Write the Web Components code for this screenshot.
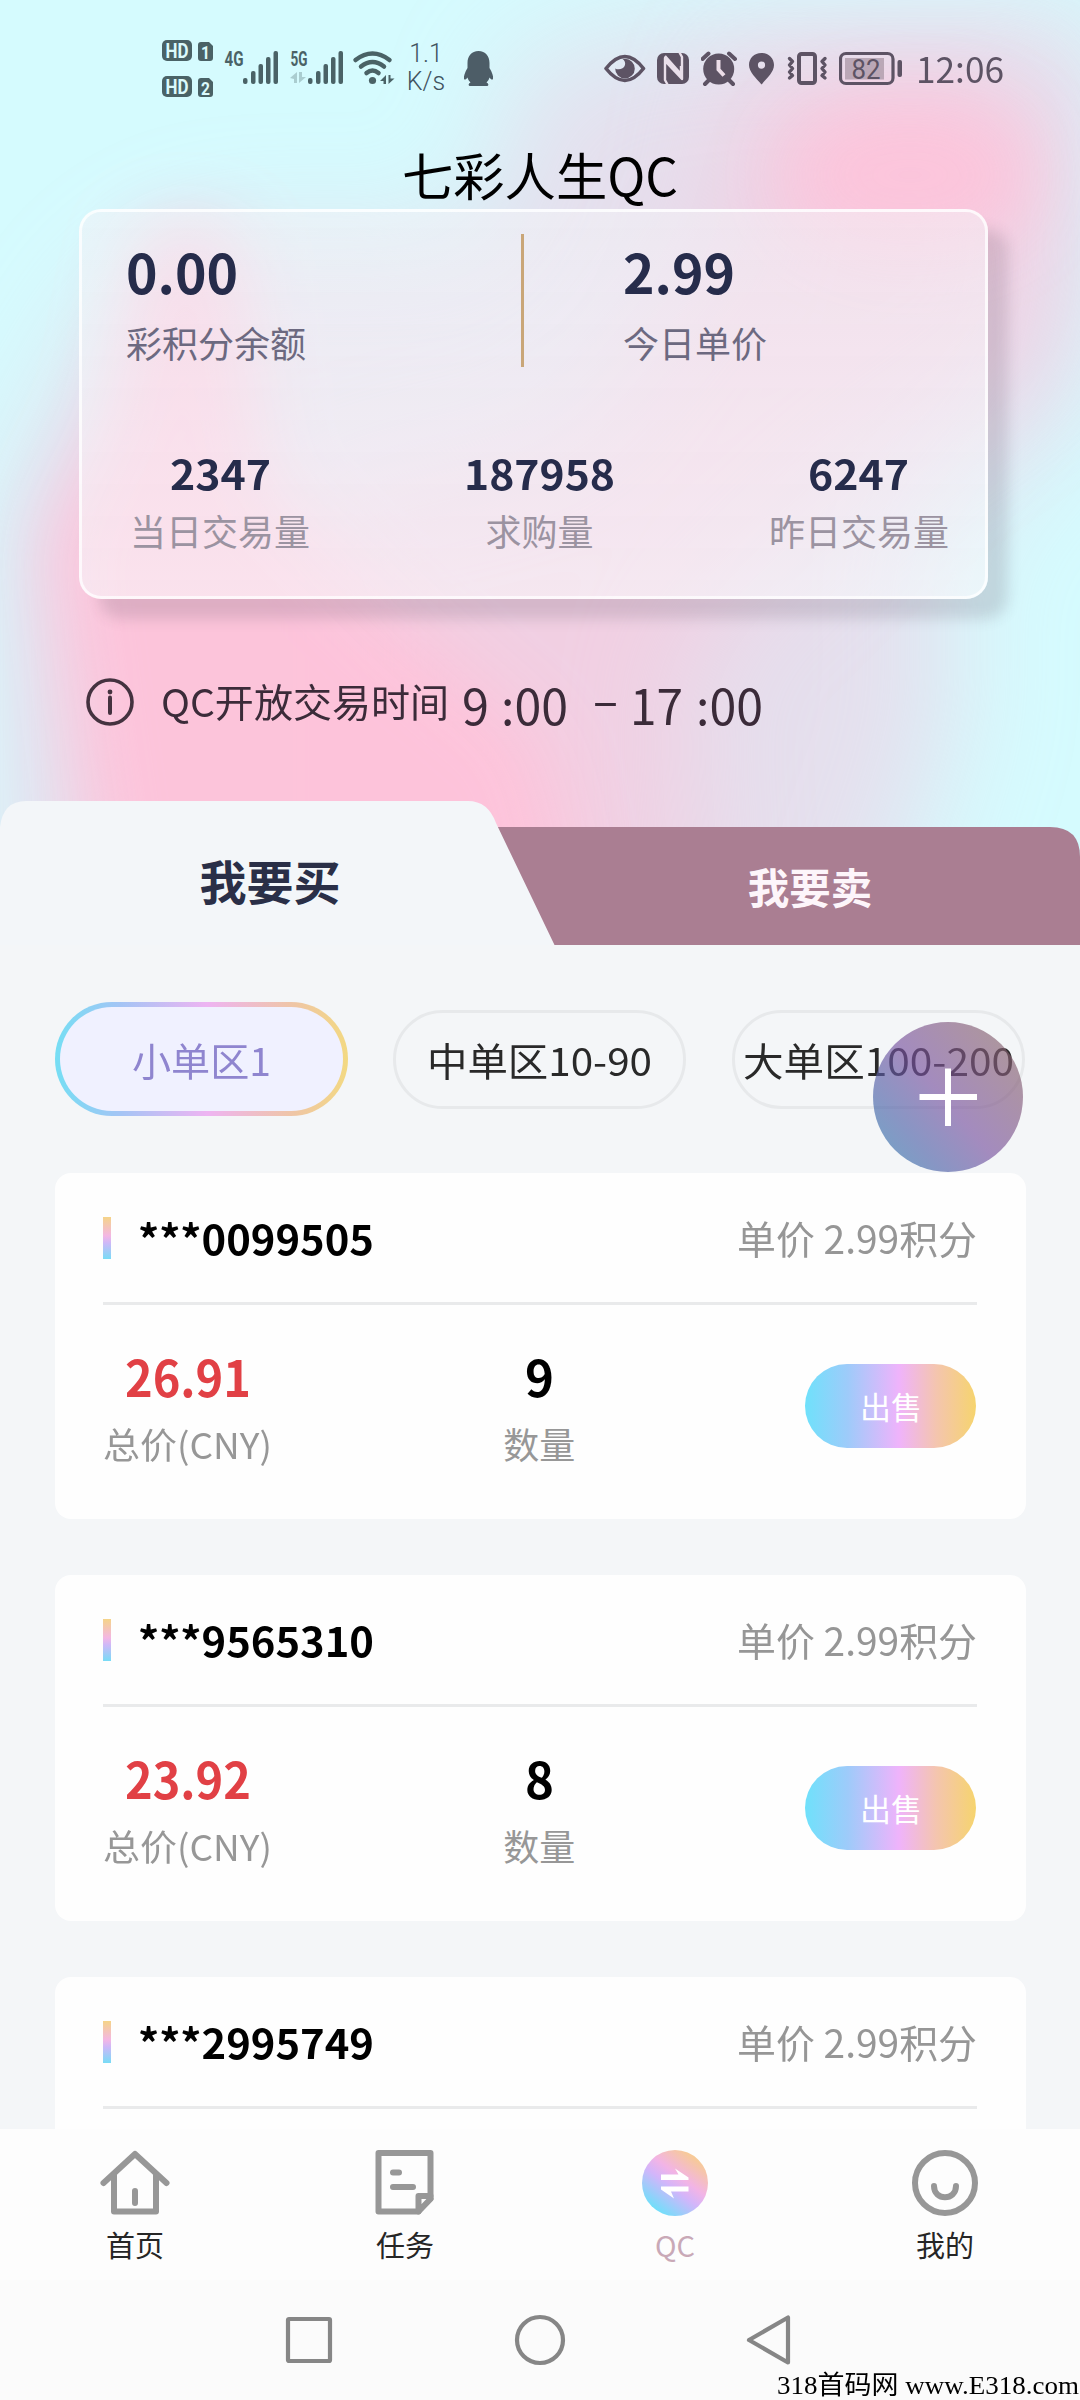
<!DOCTYPE html>
<html lang="zh-CN">
<head>
<meta charset="utf-8">
<title>七彩人生QC</title>
<style>
html,body{margin:0;padding:0}
body{width:1080px;height:2400px;overflow:hidden;background:#f4f5f7;font-family:"Noto Sans CJK SC","Noto Sans",sans-serif;color:#222}
</style>
</head>
<body>
<qc-app></qc-app>
<script>
const define = (name, html, setup) => {
  const t = document.createElement('template');
  t.innerHTML = html;
  customElements.define(name, class extends HTMLElement {
    connectedCallback() {
      if (this.shadowRoot) return;
      this.attachShadow({mode: 'open'}).appendChild(t.content.cloneNode(true));
      if (setup) setup(this, this.shadowRoot);
    }
  });
};

/* Single line of text, optionally condensed or widened to the width in "w". */
define('fit-text', `<style>
:host{display:inline-block;line-height:1;white-space:nowrap;flex:none}
span{display:inline-block;transform-origin:0 50%;white-space:pre}
</style><span><slot></slot></span>`, (el, root) => {
  const w = parseFloat(el.getAttribute('w'));
  if (!w) return;
  const s = root.querySelector('span');
  const n = s.getBoundingClientRect().width;
  el.style.width = w + 'px';
  if (n) s.style.transform = 'scaleX(' + (w / n) + ')';
});

define('status-bar', `<style>
:host{display:flex;height:120px;box-sizing:border-box;padding:38px 76px 0 162px;color:#4a6266;justify-content:space-between;align-items:flex-start}
div{display:flex;align-items:flex-start}
.r{color:#5d5364}
svg{display:block;flex:none}
text{font-family:Roboto,sans-serif}
.net{display:flex;flex-direction:column;gap:4px;align-items:center;font:300 25px/24px Roboto,sans-serif;width:40px;margin:4px 0 0 10px;color:#41535f}
.clock{font-size:36px;margin:11px 0 0 13px}
</style>
<div>
<svg width="52" height="62" viewBox="162 38 52 62"><g fill="currentColor"><rect x="162" y="40" width="30" height="21" rx="5"/><rect x="162" y="76" width="30" height="21" rx="5"/><path d="M201 42h8l4 4v12q0 3-3 3h-9q-3 0-3-3V45q0-3 3-3zM201 78h8l4 4v12q0 3-3 3h-9q-3 0-3-3V81q0-3 3-3z"/></g>
<g fill="#dcfafc" font-weight="700" font-size="20"><text x="165.500" y="57.800" textLength="23" lengthAdjust="spacingAndGlyphs">HD</text><text x="165.500" y="93.800" textLength="23" lengthAdjust="spacingAndGlyphs">HD</text><text x="201" y="58.500" font-size="18" textLength="9" lengthAdjust="spacingAndGlyphs">1</text><text x="201" y="94.500" font-size="18" textLength="9" lengthAdjust="spacingAndGlyphs">2</text></g></svg>
<svg width="56" height="62" viewBox="224 38 56 62" style="margin-left:10px" fill="currentColor"><text x="224.500" y="66" font-size="20" font-weight="700" textLength="19" lengthAdjust="spacingAndGlyphs">4G</text><g><rect x="243" y="78" width="4.500" height="6" rx="2"/><rect x="251" y="71" width="4.500" height="13" rx="2"/><rect x="258.500" y="64" width="4.500" height="20" rx="2"/><rect x="266" y="57" width="4.500" height="27" rx="2"/><rect x="273.500" y="51" width="4.500" height="33" rx="2"/></g></svg>
<svg width="56" height="62" viewBox="289 38 56 62" style="margin-left:9px" fill="currentColor"><text x="290.500" y="66" font-size="20" font-weight="700" textLength="17" lengthAdjust="spacingAndGlyphs">5G</text><path opacity=".3" d="M290 78l7-6v11h-3v-4zM299 72h3v5h4l-7 6z"/><g><rect x="308" y="78" width="4.500" height="6" rx="2"/><rect x="316" y="71" width="4.500" height="13" rx="2"/><rect x="323.500" y="64" width="4.500" height="20" rx="2"/><rect x="331" y="57" width="4.500" height="27" rx="2"/><rect x="338.500" y="51" width="4.500" height="33" rx="2"/></g></svg>
<svg width="44" height="62" viewBox="352 38 44 62" style="margin-left:7px"><g fill="none" stroke="currentColor" stroke-width="4.500" stroke-linecap="round"><path d="M355.500 60q17-13 34 0M361 66.500q11.500-9 23 0M366.500 73q6-5 12 0"/></g><circle cx="372.500" cy="80.500" r="3.600" fill="currentColor"/><path fill="currentColor" d="M380 81l6-6v9h-2.500v-3zM388.500 75h2v3.500h4l-6 5.500z"/></svg>
<div class="net"><span>1.1</span><span>K/s</span></div>
<svg width="32" height="62" viewBox="463 38 32 62" style="margin-left:17px"><path fill="#4d5d67" d="M478.500 51c7 0 11 5 11 12v5c2.500 4 4 8 3.500 11-.7 1.500-2.500 0-3.500-1.500-.6 2-1.500 3.500-3 5 2 .8 2.500 3 1 3.500h-18c-1.500-.5-1-2.700 1-3.500-1.500-1.500-2.400-3-3-5-1 1.500-2.800 3-3.500 1.500-.5-3 1-7 3.500-11v-5c0-7 4-12 11-12z"/></svg>
</div>
<div class="r">
<svg width="42" height="62" viewBox="604 38 42 62"><path d="M606 68.500Q625 44.500 643.500 68.500Q625 92.500 606 68.500z" fill="none" stroke="currentColor" stroke-width="3.600" stroke-linejoin="round"/><path fill="currentColor" d="M625 58.800a9.800 9.800 0 1 1-9.800 9.600c2.600 1.600 8.600 1.200 9.800-3.400.7-2.600-.6-4.800-2.500-6z"/></svg>
<svg width="32" height="62" viewBox="657 38 32 62" style="margin-left:11px"><rect x="657" y="53" width="32" height="31" rx="7" fill="currentColor"/><g fill="none" stroke="#e9dfea" stroke-width="2.400" stroke-linejoin="round"><path d="M667.500 84.500L665 80V58L681 75.500V66M679.500 52.500L682 57V79L665 61M665 56L681 74"/></g></svg>
<svg width="36" height="62" viewBox="701 38 36 62" style="margin-left:12px"><circle cx="718.700" cy="69" r="15.500" fill="currentColor"/><path d="M702.500 59l6-5.500M729 53.500l6 5.500M709 80l-4 4M729 80l4 4" stroke="currentColor" stroke-width="4" stroke-linecap="round"/><path d="M718.500 60v9.500l5.500 6" fill="none" stroke="#ecdde8" stroke-width="4"/></svg>
<svg width="26" height="62" viewBox="749 38 26 62" style="margin-left:12px"><path fill="currentColor" fill-rule="evenodd" d="M761.500 53c7.500 0 12.500 5.500 12.500 12 0 7-7 13-12.500 19.500C756 78 749 72 749 65c0-6.500 5-12 12.500-12zm0 8.500a3.600 3.600 0 1 0 0 7.200 3.600 3.600 0 0 0 0-7.200z"/></svg>
<svg width="41" height="62" viewBox="787 38 41 62" style="margin-left:12px"><g fill="none" stroke="currentColor" stroke-width="4"><rect x="799" y="54" width="16" height="29" rx="2.500"/><path stroke-width="3.400" stroke-linejoin="round" stroke-linecap="round" d="M789.500 58.500l3 3-3 3.500 3 3.500-3 3.500 3 3.500-3 2.500M825 58.500l-3 3 3 3.500-3 3.500 3 3.500-3 3.500 3 2.500"/></g></svg>
<svg width="64" height="62" viewBox="839 38 64 62" style="margin-left:11px"><rect x="840.500" y="53.500" width="52.500" height="30" rx="5.500" fill="none" stroke="currentColor" stroke-width="3.200"/><rect x="845" y="58" width="39" height="21.500" fill="#a997a6" opacity=".75"/><rect x="897.500" y="60" width="4.500" height="17" rx="2" fill="currentColor"/><text x="851.500" y="78.500" font-size="27" textLength="29" lengthAdjust="spacingAndGlyphs" fill="currentColor">82</text></svg>
<fit-text class="clock" w="88">12:06</fit-text>
</div>`);

define('hero-backdrop', `<style>:host,svg{display:block}</style>
<svg width="1080" height="945" viewBox="0 0 1080 945">
<defs><filter id="a" x="-50%" y="-50%" width="200%" height="200%"><feGaussianBlur stdDeviation="36"/></filter><filter id="b" x="-50%" y="-50%" width="200%" height="200%"><feGaussianBlur stdDeviation="58"/></filter></defs>
<rect width="1080" height="945" fill="#d5fbfe"/>
<path d="M520 60L700 20L1120 20L1080 400L940 560L960 700L860 1000H0V500L110 300L200 240H480z" fill="#f3c9e0" opacity=".55" filter="url(#b)"/>
<path d="M740 70L1040 50L1060 340L860 480L680 660L700 1000H300V500L560 440L720 240z" fill="#fdc0d8" opacity=".5" filter="url(#b)"/>
<path d="M145 230H230L265 480L400 620L540 740L600 1000H110L75 760L45 540L110 420z" fill="#fec3da" opacity=".95" filter="url(#a)"/>
<ellipse cx="910" cy="175" rx="125" ry="75" fill="#fec3da" opacity=".85" filter="url(#a)"/>
</svg>`);

define('stat-item', `<style>
:host{display:flex;flex-direction:column;align-items:var(--align,center);gap:var(--gap,20px)}
fit-text{font-weight:700;font-size:var(--num,41px);color:#262c4b}
.l{font-size:36px;line-height:1;color:var(--label,#9b93a1);white-space:nowrap}
</style><fit-text></fit-text><span class="l"><slot></slot></span>`, (el, root) => {
  const old = root.querySelector('fit-text');
  const f = document.createElement('fit-text');
  f.setAttribute('w', el.getAttribute('w'));
  f.textContent = el.getAttribute('value');
  old.replaceWith(f);
});

define('balance-card', `<style>
:host{display:flex;flex-direction:column;box-sizing:border-box;width:909px;height:390px;margin:10px 0 0 79px;border:3px solid rgba(255,255,255,.75);border-radius:22px;background:linear-gradient(180deg,rgba(243,243,247,.52),rgba(248,249,251,.57));box-shadow:20px 20px 14px rgba(70,60,80,.16)}
.top{display:flex;align-items:flex-start;padding:22px 0 0 44px;height:133px;--align:flex-start;--num:54px;--gap:26px;--label:#6c6980}
.top stat-item{margin-top:10px}
.top stat-item:first-child{width:395px}
i{width:3px;height:133px;background:#c9a678;margin-right:99px}
.bot{display:flex;justify-content:space-between;padding:85px 36px 0 48px;--gap:19px}
</style>
<div class="top"><stat-item value="0.00" w="112">彩积分余额</stat-item><i></i><stat-item value="2.99" w="112">今日单价</stat-item></div>
<div class="bot"><stat-item value="2347" w="101">当日交易量</stat-item><stat-item value="187958" w="151">求购量</stat-item><stat-item value="6247" w="101">昨日交易量</stat-item></div>`);

define('time-notice', `<style>
:host{display:flex;height:48px;margin:79px 0 0 86px;color:#3b2b39;font-size:38.800px}
.t{margin:3px 0 0 27px}
.h{font-size:49px}
.h{margin-top:.5px}
</style>
<svg width="48" height="48" viewBox="0 0 48 48"><circle cx="24" cy="24" r="22" fill="none" stroke="#44323f" stroke-width="3.600"/><path d="M24 19.500V35" stroke="#44323f" stroke-width="4" stroke-linecap="round"/><circle cx="24" cy="14" r="2.400" fill="#44323f"/></svg>
<fit-text class="t" w="288">QC开放交易时间</fit-text>
<fit-text class="h" w="27" style="margin-left:13px">9</fit-text>
<fit-text class="h" w="67" style="margin-left:12px">:00</fit-text>
<fit-text class="h" w="25" style="margin:-6px 0 0 25px">–</fit-text>
<fit-text class="h" w="53" style="margin-left:12px">17</fit-text>
<fit-text class="h" w="67" style="margin-left:13px">:00</fit-text>`);

define('trade-tabs', `<style>
:host{display:grid;margin-top:75px;height:144px;width:1080px}
svg,.row{grid-area:1/1}
.row{display:grid;grid-template-columns:540px 540px;justify-items:center;align-items:start;font-weight:700}
.a{font-size:47px;color:#2a2f47;margin-top:55px}
.b{font-size:41.500px;color:#fdf5fa;margin-top:65px}
</style>
<svg width="1080" height="144" viewBox="0 0 1080 144"><path d="M480 26H1050Q1080 26 1080 56V144H480z" fill="#aa7e92"/><path d="M0 144V26Q3 0 26 0H468Q488 0 496 22L554.500 144z" fill="#f3f6f9"/></svg>
<div class="row"><fit-text class="a">我要买</fit-text><fit-text class="b">我要卖</fit-text></div>`);

define('zone-pill', `<style>
:host{display:flex;box-sizing:border-box;width:293px;height:99px;flex:none;align-items:center;justify-content:center;border:3px solid #e7e9eb;border-radius:50px;font-size:38.500px;color:#292929}
:host([active]){height:114px;border:5px solid transparent;border-radius:58px;color:#8f85cf;background:linear-gradient(#f0f1ff,#f0f1ff) padding-box,linear-gradient(90deg,#75def4,#a3c5f5 22%,#eeb4f2 52%,#efc6a4 82%,#f3d982) border-box}
fit-text{margin-bottom:4px}
</style><slot></slot>`);

define('order-card', `<style>
:host{display:block;box-sizing:border-box;height:346px;width:971px;background:#fefefe;border-radius:16px;padding:0 49px 0 48.500px;flex:none}
.head{display:flex;align-items:center;height:129px;border-bottom:3px solid #e9eaeb;box-sizing:content-box}
i{width:8px;height:42px;background:linear-gradient(#f5d488,#f3b6e4 45%,#cdb8f8 62%,#78dcf6);margin-right:27px}
.id{font-weight:700;font-size:41px;color:#000;margin-bottom:1px}
.p{margin:2px 0 0 auto;height:41px;display:flex;font-size:39px;color:#969696}
.body{display:flex;justify-content:space-between;padding-top:46px}
.c{display:flex;flex-direction:column;align-items:center;gap:24px}
.n{font-weight:700;font-size:49.500px;color:#000}
.red{color:#e14045}
.l{font-size:36px;color:#979797}
.b{margin:13px 0 0;width:171px;height:84px;border-radius:42px;background:linear-gradient(90deg,#6fe1fb,#9ecbfa 25%,#efb3fb 55%,#f4c5ae 77%,#f6d46e);display:flex;align-items:center;justify-content:center;color:#fff;font-size:31px}
.b fit-text{margin-bottom:2px}
.q{margin-left:1px}
</style>
<div class="head"><i></i><span class="id"></span><span class="p"><fit-text w="240">单价 2.99积分</fit-text></span></div>
<div class="body"><div class="c"><span class="n red" id="t"></span><fit-text class="l" w="169">总价(CNY)</fit-text></div><div class="c q"><span class="n" id="q"></span><fit-text class="l">数量</fit-text></div><div class="b"><fit-text>出售</fit-text></div></div>`, (el, root) => {
  const put = (sel, text, w) => {
    const f = document.createElement('fit-text');
    f.setAttribute('w', w);
    f.textContent = text;
    const h = root.querySelector(sel);
    h.style.display = 'flex';
    h.append(f);
  };
  put('.id', el.getAttribute('user'), 236);
  if (!el.hasAttribute('total')) { root.querySelector('.body').remove(); return; }
  put('#t', el.getAttribute('total'), 126);
  put('#q', el.getAttribute('qty'), 29);
});

define('tab-item', `<style>
:host{display:flex;flex-direction:column;align-items:center;width:270px;padding-top:19px;gap:12px;font-size:29px;color:#262626}
:host([active]){color:#c9a9b7}
</style><slot name="icon"></slot><fit-text><slot></slot></fit-text>`);

define('bottom-bar', `<style>
:host{display:flex;height:151px;background:#fdfdfd}
svg{display:block;width:70px;height:70px}
g{fill:none;stroke:#979797;stroke-width:6;stroke-linecap:round;stroke-linejoin:round}
</style>
<tab-item><svg slot="icon" viewBox="0 0 70 70"><g><path d="M3.500 35L35 6L66.500 35"/><path d="M14 27V63.500H56V27M35 43V55"/></g></svg>首页</tab-item>
<tab-item><svg slot="icon" viewBox="0 0 70 70"><g><path d="M48.500 63.500H8.500V5H60.500V50.500"/><path d="M60.500 48H48.500V63.500L60.500 51M23 24.500H29M23 39H43"/></g></svg>任务</tab-item>
<tab-item active><svg slot="icon" viewBox="0 0 70 70"><defs><linearGradient id="g" x1=".2" y1=".9" x2=".8" y2=".1"><stop offset="0" stop-color="#70dffa"/><stop offset=".42" stop-color="#d3b5fa"/><stop offset=".62" stop-color="#f2b4e6"/><stop offset="1" stop-color="#f7cb94"/></linearGradient></defs><circle cx="35" cy="35" r="33" fill="url(#g)"/><path fill="#fff" d="M21 26.500H38.500L35 20.500L48.500 29.500V32H21zM48.500 43.500H31L34 50.500L21 41.500V38.500H48.500z"/></svg>QC</tab-item>
<tab-item><svg slot="icon" viewBox="0 0 70 70"><g><circle cx="35" cy="35" r="30"/><path d="M24 38C24 53 46 53 46 38"/></g></svg>我的</tab-item>`);

define('system-bar', `<style>
:host{display:grid;height:120px;background:#fbfbfb;grid-template-rows:95px 25px}
.k{display:flex;gap:179px;padding:34px 0 0 283px}
svg{display:block;width:52px;height:52px}
g{fill:none;stroke:#868686;stroke-width:4.200;stroke-linejoin:round}
.w{justify-self:end;display:flex;font:26px/1 "Liberation Serif","Noto Sans CJK SC",serif;color:#000;margin:-2px 1px 0 0}
</style>
<div class="k"><svg viewBox="0 0 52 52"><g><rect x="5" y="5" width="42" height="42" rx="1"/></g></svg><svg viewBox="0 0 52 52"><g><circle cx="26" cy="26" r="23"/></g></svg><svg viewBox="0 0 52 52"><g><path d="M43 3.500V48.500L4 26z"/></g></svg></div>
<span class="w"><fit-text w="302">318首码网 www.E318.com</fit-text></span>`);

define('add-button', `<style>
:host{position:absolute;left:873px;top:1022px;width:150px;height:150px;border-radius:50%;background:linear-gradient(50deg,rgba(45,120,172,.65) 5%,rgba(78,98,168,.65) 25%,rgba(120,82,159,.65) 48%,rgba(132,92,125,.65) 75%,rgba(135,105,95,.65))}
svg{display:block}
</style><svg width="150" height="150" viewBox="0 0 150 150"><path d="M46.500 75H104M75 46.500V104" stroke="#fff" stroke-width="6"/></svg>`);

define('qc-app', `<style>
:host{display:flex;flex-direction:column;position:relative;width:1080px;height:2400px;overflow:hidden;background:#f4f5f7}
.hero{display:grid;height:945px;flex:none}
.hero>*{grid-area:1/1;min-width:0}
.col{display:flex;flex-direction:column}
h1{margin:28px 0 0;font-weight:400;font-size:51.300px;line-height:51px;height:51px;text-align:center;color:#000}
.main{height:1184px;flex:none;overflow:hidden;box-sizing:border-box;padding:56.500px 54px 0 54.500px;background:#f4f6f8}
.pills{display:flex;align-items:center;gap:45.500px;height:115px;margin-bottom:56.500px}
.list{display:flex;flex-direction:column;gap:56px}
</style>
<section class="hero"><hero-backdrop></hero-backdrop><div class="col"><status-bar></status-bar><h1>七彩人生QC</h1><balance-card></balance-card><time-notice></time-notice><trade-tabs></trade-tabs></div></section>
<section class="main">
<div class="pills"><zone-pill active><fit-text w="139">小单区1</fit-text></zone-pill><zone-pill><fit-text w="225">中单区10-90</fit-text></zone-pill><zone-pill><fit-text w="271">大单区100-200</fit-text></zone-pill></div>
<div class="list"><order-card user="***0099505" total="26.91" qty="9"></order-card><order-card user="***9565310" total="23.92" qty="8"></order-card><order-card user="***2995749"></order-card></div>
</section>
<bottom-bar></bottom-bar><system-bar></system-bar><add-button></add-button>`);
</script>
</body>
</html>
